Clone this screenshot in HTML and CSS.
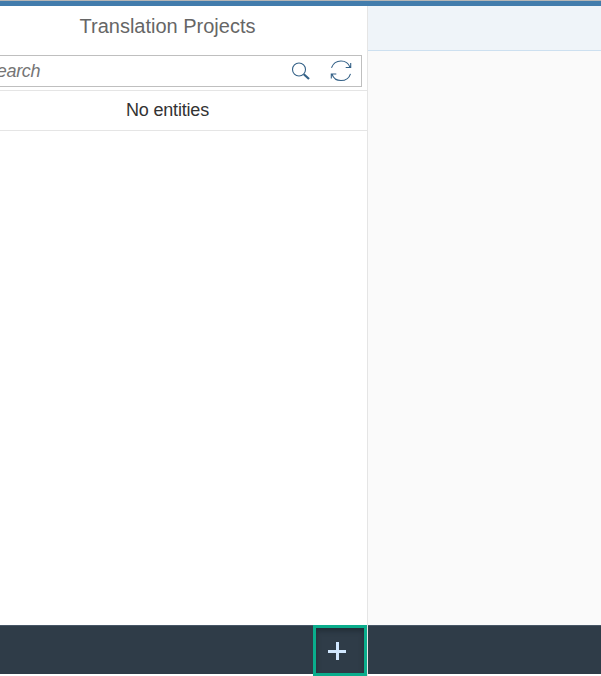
FILE: index.html
```html
<!DOCTYPE html>
<html lang="en">
<head>
<meta charset="utf-8">
<title>Translation Projects</title>
<link rel="stylesheet" href="styles.css">
</head>
<body>
<div class="shell">
  <div class="topbar"></div>
  <div class="split">
    <section class="master">
      <h1 class="title">Translation Projects</h1>
      <div class="search">
        <span class="placeholder">Search</span>
        <svg class="icon" width="20" height="20" viewBox="0 0 20 20"><circle cx="8" cy="8.500" r="6.500"/><path class="handle" d="M12.800 13.200 18 18"/></svg>
        <svg class="icon" width="22" height="22" viewBox="0 0 22 22"><path d="M1.500 7.700C3 3.800 6.500 1 11 1c4.300 0 7.700 2.600 9 6.300M20.700 3v4.500h-5M20.500 13.800c-1.300 4-5 6.700-9.500 6.700-4.300 0-7.700-2.600-9-6.300M1.300 18.500V14h5"/></svg>
      </div>
      <div class="empty">No entities</div>
      <footer class="footer">
        <button class="add" aria-label="Add"><svg width="18" height="18" viewBox="0 0 18 18"><path d="M0 9.500h18M9.500 0v18"/></svg></button>
      </footer>
    </section>
    <section class="detail">
      <div class="detail-header"></div>
      <footer class="footer"></footer>
    </section>
  </div>
</div>
</body>
</html>
```
FILE: styles.css
```css
* { box-sizing: border-box; }
body {
  margin: 0;
  background: #fff;
  font-family: "Liberation Sans", Arial, sans-serif;
  overflow: hidden;
}
.shell { height: 676px; display: flex; flex-direction: column; }
.topbar { height: 6px; flex: none; background: #427cac; border-top: 1px solid #b5b5b5; }
.split { flex: 1; display: flex; }
.master {
  width: 368px;
  display: flex;
  flex-direction: column;
  border-right: 1px solid #e5e5e5;
}
.title {
  margin: 0;
  height: 49px;
  padding-right: 32px;
  font-size: 20px;
  font-weight: 400;
  line-height: 41px;
  text-align: center;
  color: #666;
}
.search {
  height: 32px;
  margin: 0 5px 3px -1px;
  padding-right: 9px;
  display: flex;
  align-items: center;
  border: 1px solid #bfbfbf;
}
.placeholder {
  flex: 1;
  margin-left: -15px;
  font-size: 18px;
  font-style: italic;
  letter-spacing: -0.3px;
  color: #757575;
}
.icon {
  margin-left: 19px;
  fill: none;
  stroke: #346187;
  stroke-width: 1.1;
}
.handle { stroke-width: 2.2; }
.empty {
  height: 41px;
  padding-right: 32px;
  border-top: 1px solid #e5e5e5;
  border-bottom: 1px solid #e5e5e5;
  font-size: 18px;
  letter-spacing: -0.18px;
  line-height: 38px;
  text-align: center;
  color: #333;
}
.footer {
  height: 49px;
  margin-top: auto;
  margin-bottom: 2px;
  display: flex;
  justify-content: flex-end;
  background: #2f3c48;
  box-shadow: inset 0 1px #475666;
}
.add {
  width: 54px;
  height: 51px;
  flex: none;
  padding: 0 6px 0 0;
  display: flex;
  align-items: center;
  justify-content: center;
  border: 3px solid #0aad8c;
  background: #2f3c48;
  box-shadow: inset 0 3px 5px #222d37;
}
.add svg { stroke: #d1e8ff; stroke-width: 3; }
.detail { flex: 1; display: flex; flex-direction: column; background: linear-gradient(#fafafa, #fafafa) 0 0 / 100% 619px no-repeat; }
.detail-header { height: 45px; background: #eff4f9; border-bottom: 1px solid #cde0f0; }
```
